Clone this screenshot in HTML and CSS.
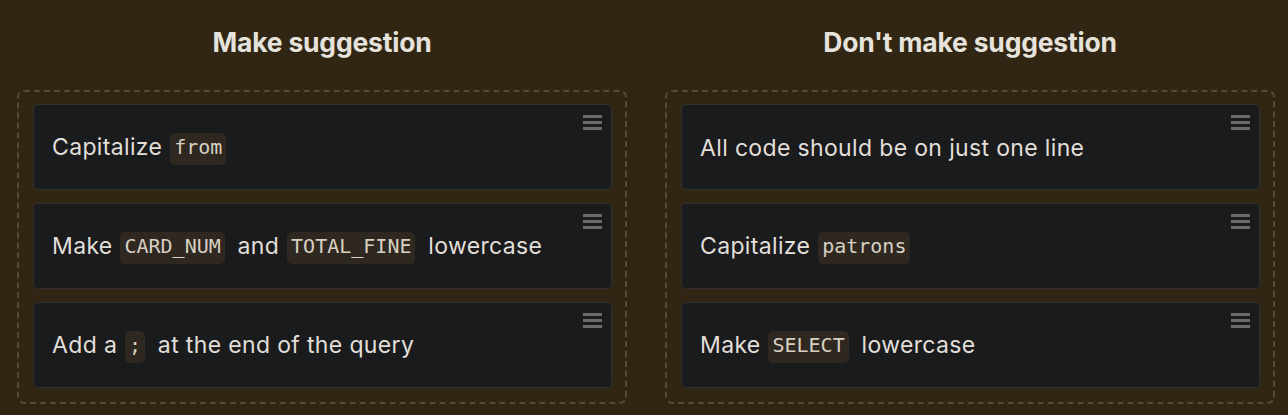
FILE: index.html
```html
<!DOCTYPE html>
<html lang="en">
<head>
<meta charset="utf-8">
<title>Suggestions</title>
<link rel="stylesheet" href="styles.css">
</head>
<body>
<main class="board">
  <section class="column">
    <h2 class="column-title">Make suggestion</h2>
    <div class="dropzone">
      <div class="card"><p class="card-text">Capitalize <code>from</code></p><span class="handle"><i></i><i></i><i></i></span></div>
      <div class="card"><p class="card-text">Make <code>CARD_NUM</code> and <code>TOTAL_FINE</code> lowercase</p><span class="handle"><i></i><i></i><i></i></span></div>
      <div class="card"><p class="card-text">Add a <code>;</code> at the end of the query</p><span class="handle"><i></i><i></i><i></i></span></div>
    </div>
  </section>
  <section class="column">
    <h2 class="column-title">Don't make suggestion</h2>
    <div class="dropzone">
      <div class="card"><p class="card-text">All code should be on just one line</p><span class="handle"><i></i><i></i><i></i></span></div>
      <div class="card"><p class="card-text">Capitalize <code>patrons</code></p><span class="handle"><i></i><i></i><i></i></span></div>
      <div class="card"><p class="card-text">Make <code>SELECT</code> lowercase</p><span class="handle"><i></i><i></i><i></i></span></div>
    </div>
  </section>
</main>
</body>
</html>
```
FILE: styles.css
```css
* { box-sizing: border-box; }
html, body { margin: 0; padding: 0; }
body {
  background: #302613;
  font-family: "Inter", "Noto Sans", sans-serif;
  color: #e4e1da;
  width: 1288px;
  height: 415px;
  overflow: hidden;
}
.board {
  display: grid;
  grid-template-columns: 610px 610px;
  column-gap: 38px;
  padding: 0 14px 0 17px;
}
.column {
  display: flex;
  flex-direction: column;
}
.column-title {
  margin: 0;
  height: 90px;
  padding-top: 26px;
  text-align: center;
  font-size: 26.5px;
  font-weight: 700;
  line-height: 32px;
  color: #e6e2dc;
  letter-spacing: -0.2px;
}
.dropzone {
  border: 2px dashed #574b33;
  border-radius: 7px;
  padding: 12px 13px 14px 14px;
  display: flex;
  flex-direction: column;
  gap: 13px;
  height: 314px;
}
.card {
  position: relative;
  background: #1a1b1d;
  border: 1px solid #303030;
  border-radius: 5px;
  height: 86px;
  padding: 0 18px;
  display: flex;
  align-items: center;
}
.card-text {
  margin: 0;
  padding-top: 2px;
  font-size: 23px;
  line-height: 32px;
  letter-spacing: 0.35px;
  color: #e2dfd9;
}
.card-text code {
  display: inline-block;
  font-family: "DejaVu Sans Mono", "Liberation Mono", monospace;
  font-size: 20px;
  line-height: 24px;
  letter-spacing: 0;
  background: #2f2820;
  color: #d8d0c2;
  border-radius: 5px;
  padding: 2px 4px 6px;
  margin: 0 6px 0 1px;
  vertical-align: middle;
}
.handle {
  position: absolute;
  top: 10px;
  right: 9px;
  width: 19px;
  display: flex;
  flex-direction: column;
  gap: 3px;
}
.handle i {
  display: block;
  height: 3px;
  background: #6a6a6a;
}
```
